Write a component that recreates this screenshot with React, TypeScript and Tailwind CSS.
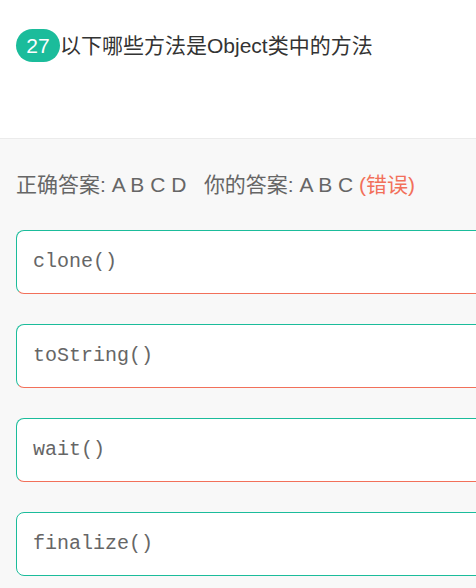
const options = [
  { id: "A", code: "clone()", picked: true },
  { id: "B", code: "toString()", picked: true },
  { id: "C", code: "wait()", picked: true },
  { id: "D", code: "finalize()", picked: false },
];

export default function App() {
  return (
    <div className="min-h-[588px] w-[476px] overflow-hidden bg-[#f8f8f8] font-['Liberation_Sans','Noto_Sans_CJK_SC',sans-serif]">
      <div className="h-[139px] border-b border-[#ebebeb] bg-white px-4 pt-[29px]">
        <div className="flex items-center">
          <span className="flex h-[33px] w-[44px] items-center justify-center rounded-full bg-[#1bbc9b] text-[21px] leading-none text-white">
            27
          </span>
          <span className="text-[21px] leading-[33px] text-[#333]">
            以下哪些方法是Object类中的方法
          </span>
        </div>
      </div>

      <div className="px-4 pt-[32px]">
        <p className="whitespace-pre text-[21px] leading-[28px] text-[#666]">
          正确答案: A B C D{"   "}你的答案: A B C{" "}
          <span className="text-[#f2705a]">(错误)</span>
        </p>

        <div className="mt-[31px] flex w-[480px] flex-col gap-[30px]">
          {options.map((opt) => (
            <div
              key={opt.id}
              className={`flex h-[64px] items-center rounded-lg border border-[#1bbc9b] bg-white pl-[16px] ${
                opt.picked ? "border-b-[#f2705a]" : ""
              }`}
            >
              <span className="font-['Liberation_Mono',monospace] text-[20px] text-[#666]">
                {opt.code}
              </span>
            </div>
          ))}
        </div>
      </div>
    </div>
  );
}
